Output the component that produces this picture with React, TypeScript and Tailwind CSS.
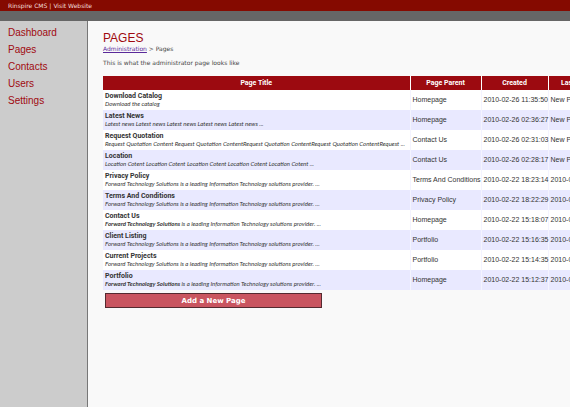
const navItems = ["Dashboard", "Pages", "Contacts", "Users", "Settings"];

type PageRow = {
  title: string;
  lead?: string;
  excerpt: string;
  parent: string;
  created: string;
  updated: string;
};

const company = "Forward Technology Solutions";
const tagline = " is a leading Information Technology solutions provider. ...";

const rows: PageRow[] = [
  { title: "Download Catalog", excerpt: "Download the catalog", parent: "Homepage", created: "2010-02-26 11:35:50", updated: "New Page" },
  { title: "Latest News", excerpt: "Latest news Latest news Latest news Latest news Latest news ...", parent: "Homepage", created: "2010-02-26 02:36:27", updated: "New Page" },
  { title: "Request Quotation", excerpt: "Request Quotation Content Request Quotation ContentRequest Quotation ContentRequest Quotation ContentRequest ...", parent: "Contact Us", created: "2010-02-26 02:31:03", updated: "New Page" },
  { title: "Location", excerpt: "Location Cotent Location Cotent Location Cotent Location Cotent Location Cotent ...", parent: "Contact Us", created: "2010-02-26 02:28:17", updated: "New Page" },
  { title: "Privacy Policy", excerpt: company + tagline, parent: "Terms And Conditions", created: "2010-02-22 18:23:14", updated: "2010-02-22 18:23:14" },
  { title: "Terms And Conditions", excerpt: company + tagline, parent: "Privacy Policy", created: "2010-02-22 18:22:29", updated: "2010-02-22 18:22:29" },
  { title: "Contact Us", lead: company, excerpt: tagline, parent: "Homepage", created: "2010-02-22 15:18:07", updated: "2010-02-22 15:18:07" },
  { title: "Client Listing", excerpt: company + tagline, parent: "Portfolio", created: "2010-02-22 15:16:35", updated: "2010-02-22 15:16:35" },
  { title: "Current Projects", excerpt: company + tagline, parent: "Portfolio", created: "2010-02-22 15:14:35", updated: "2010-02-22 15:14:35" },
  { title: "Portfolio", lead: company, excerpt: tagline, parent: "Homepage", created: "2010-02-22 15:12:37", updated: "2010-02-22 15:12:37" },
];

function TopBar() {
  return (
    <header>
      <div className="flex h-[11px] items-center gap-[2px] bg-[#850a00] px-2 font-['DejaVu_Sans',sans-serif] text-[6px] leading-[10px] text-[#f3dedb]">
        <span>Rinspire CMS</span>
        <span>|</span>
        <a href="#site">Visit Website</a>
      </div>
      <div className="h-[10px] bg-[#666666]" />
    </header>
  );
}

function Sidebar() {
  return (
    <nav className="w-[88px] shrink-0 border-r border-[#777777] bg-[#cccccc] px-2 pt-[3px]">
      <ul>
        {navItems.map((item) => (
          <li key={item} className="h-[17px] text-[10px] leading-[17px] text-[#a00a10]">
            <a href={"#" + item.toLowerCase()}>{item}</a>
          </li>
        ))}
      </ul>
    </nav>
  );
}

function PagesTable() {
  return (
    <table className="w-[512px] table-fixed border-collapse text-[7px] leading-[8px] text-[#333333]">
      <colgroup>
        <col className="w-[307px]" />
        <col className="w-[71px]" />
        <col className="w-[67px]" />
        <col className="w-[67px]" />
      </colgroup>
      <thead>
        <tr className="h-[14px] bg-[#9c0a10] font-[Roboto,sans-serif] text-white">
          <th scope="col">Page Title</th>
          <th scope="col" className="border-l border-white">Page Parent</th>
          <th scope="col" className="border-l border-white">Created</th>
          <th scope="col" className="border-l border-white">Last Updated</th>
        </tr>
      </thead>
      <tbody>
        {rows.map((row) => (
          <tr key={row.title} className="h-5 bg-white whitespace-nowrap even:bg-[#e9e9ff]">
            <td className="pl-[2px]">
              <div className="font-[Roboto,sans-serif] leading-[7px] font-bold">{row.title}</div>
              <div className="font-[Lato,sans-serif] text-[6px] leading-[7px] italic">
                {row.lead && <b>{row.lead}</b>}
                {row.excerpt}
              </div>
            </td>
            <td className="border-l border-[#f4f4ff] pl-[2px]">{row.parent}</td>
            <td className="border-l border-[#f4f4ff] pl-[2px]">{row.created}</td>
            <td className="border-l border-[#f4f4ff] pl-[2px]">{row.updated}</td>
          </tr>
        ))}
      </tbody>
    </table>
  );
}

export default function App() {
  return (
    <div className="flex min-h-screen flex-col overflow-hidden bg-[#f9f9f9] font-['Liberation_Sans',Arial,sans-serif]">
      <TopBar />
      <div className="flex flex-1">
        <Sidebar />
        <main className="min-w-0 flex-1 overflow-hidden pt-[10px] pl-[15px]">
          <h1 className="text-[12px] leading-[14px] text-[#a00a10]">PAGES</h1>
          <div className="font-['DejaVu_Sans',sans-serif] text-[6px] leading-[8px] text-[#444444]">
            <p>
              <a href="#administration" className="text-[#5a2a9a] underline">Administration</a>
              {" > Pages"}
            </p>
            <p className="mt-[6px]">This is what the administrator page looks like</p>
          </div>
          <div className="mt-[9px]">
            <PagesTable />
          </div>
          <button
            type="button"
            className="mt-[3px] ml-[2px] block h-[15px] w-[217px] border border-[#552a30] bg-[#c95560] font-['DejaVu_Sans',sans-serif] text-[7px] leading-[12px] font-bold text-white"
          >
            Add a New Page
          </button>
        </main>
      </div>
    </div>
  );
}
